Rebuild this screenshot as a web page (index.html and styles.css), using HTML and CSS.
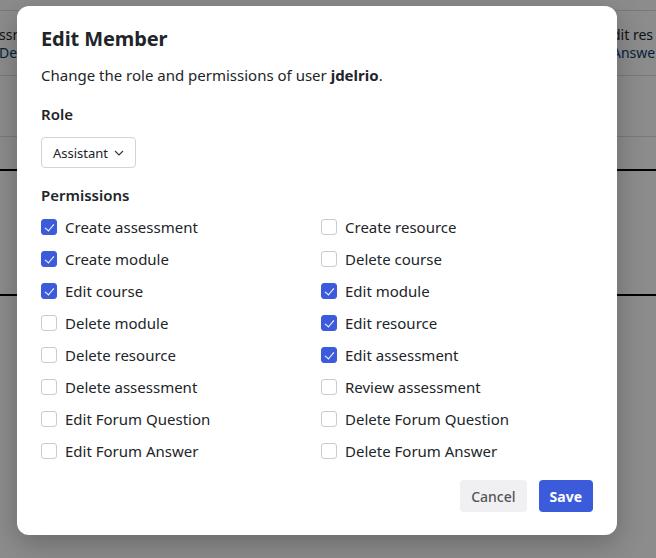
FILE: index.html
```html
<!DOCTYPE html>
<html>
<head>
<meta charset="utf-8">
<link rel="stylesheet" href="styles.css">
</head>
<body>
<div class="page">
  <div class="bg-row bg-row-top">
    <div class="bg-cell bg-left"><div>ssme</div><div class="bg-link">Del</div></div>
    <div class="bg-cell bg-right"><div>dit res</div><div class="bg-link">Answe</div></div>
  </div>
  <div class="bg-row bg-row-2"></div>
  <div class="bg-row bg-row-3"></div>
  <div class="bg-row bg-row-4"></div>
</div>
<div class="overlay"></div>
<div class="modal">
  <h2 class="title">Edit Member</h2>
  <p class="desc">Change the role and permissions of user <b>jdelrio</b>.</p>
  <div class="label">Role</div>
  <div class="select">Assistant <svg width="10" height="6" viewBox="0 0 10 6"><path d="M1 1l4 4 4-4" fill="none" stroke="#333" stroke-width="1.1"/></svg></div>
  <div class="label perm-label">Permissions</div>
  <div class="grid">
    <label class="item"><span class="cb on"></span>Create assessment</label>
    <label class="item"><span class="cb"></span>Create resource</label>
    <label class="item"><span class="cb on"></span>Create module</label>
    <label class="item"><span class="cb"></span>Delete course</label>
    <label class="item"><span class="cb on"></span>Edit course</label>
    <label class="item"><span class="cb on"></span>Edit module</label>
    <label class="item"><span class="cb"></span>Delete module</label>
    <label class="item"><span class="cb on"></span>Edit resource</label>
    <label class="item"><span class="cb"></span>Delete resource</label>
    <label class="item"><span class="cb on"></span>Edit assessment</label>
    <label class="item"><span class="cb"></span>Delete assessment</label>
    <label class="item"><span class="cb"></span>Review assessment</label>
    <label class="item"><span class="cb"></span>Edit Forum Question</label>
    <label class="item"><span class="cb"></span>Delete Forum Question</label>
    <label class="item"><span class="cb"></span>Edit Forum Answer</label>
    <label class="item"><span class="cb"></span>Delete Forum Answer</label>
  </div>
  <div class="actions">
    <button class="btn cancel">Cancel</button>
    <button class="btn save">Save</button>
  </div>
</div>
</body>
</html>
```
FILE: styles.css
```css
* { box-sizing: border-box; }
html, body { margin: 0; padding: 0; }
body {
  width: 656px; height: 558px; overflow: hidden;
  font-family: "Noto Sans", "Open Sans", sans-serif;
  color: #212529;
  background: #fff;
  position: relative;
}
.page { width: 656px; height: 558px; }
.bg-row { border-bottom: 1px solid #ddd; }
.bg-row-top {
  margin-top: 10px; border-top: 1px solid #ddd;
  height: 66px; display: flex; justify-content: space-between;
  padding-top: 15px; font-size: 14px; line-height: 18px;
}
.bg-left { margin-left: -1px; }
.bg-right { width: 44px; white-space: nowrap; overflow: hidden; }
.bg-left div { white-space: nowrap; }
.bg-link { color: #0b3d6e; }
.bg-row-2 { height: 61px; }
.bg-row-3 { height: 34px; border-bottom: 2px solid #000; }
.bg-row-4 { height: 125px; border-bottom: 2px solid #000; }
.overlay {
  position: absolute; inset: 0;
  background: rgba(0,0,0,0.45);
}
.modal {
  position: absolute; left: 17px; top: 6px;
  width: 600px; height: 529px;
  background: #fff; border-radius: 12px;
  box-shadow: 0 8px 28px rgba(0,0,0,0.25);
  padding: 23px 24px 24px 24px;
}
.title {
  margin: 0; font-size: 20px; font-weight: 700; line-height: 20px;
  letter-spacing: -0.1px;
}
.desc { margin: 15px 0 0; font-size: 15px; line-height: 22px; }
.desc b { font-weight: 700; }
.label { margin-top: 18px; font-size: 15px; font-weight: 600; line-height: 20px; }
.select {
  margin-top: 13px;
  display: inline-flex; align-items: center; gap: 6px;
  height: 31px; padding: 0 11px;
  border: 1px solid #d0d3d8; border-radius: 4px;
  font-size: 13px;
}
.perm-label { margin-top: 17px; }
.grid {
  margin-top: 10px;
  display: grid; grid-template-columns: 280px 280px;
  row-gap: 8px;
}
.item {
  display: flex; align-items: center; gap: 8px;
  height: 24px; font-size: 15px;
}
.cb {
  width: 16px; height: 16px; border: 1px solid #c9ccd1; border-radius: 3px;
  background: #fff; flex: none; position: relative;
}
.cb.on { background: #3b5bdb; border-color: #3b5bdb; }
.cb.on::after {
  content: ""; position: absolute; left: 5px; top: 2px;
  width: 4px; height: 8px;
  border: solid #fff; border-width: 0 1.6px 1.6px 0;
  transform: rotate(40deg);
}
.actions { display: flex; justify-content: flex-end; gap: 12px; margin-top: 17px; }
.btn {
  height: 32px; border: none; border-radius: 4px;
  font-family: inherit; font-size: 14px; padding: 0 11px;
}
.cancel { background: #f0f0f2; color: #555; font-weight: 500; }
.save { background: #3b5bdb; color: #fff; font-weight: 700; }
```
